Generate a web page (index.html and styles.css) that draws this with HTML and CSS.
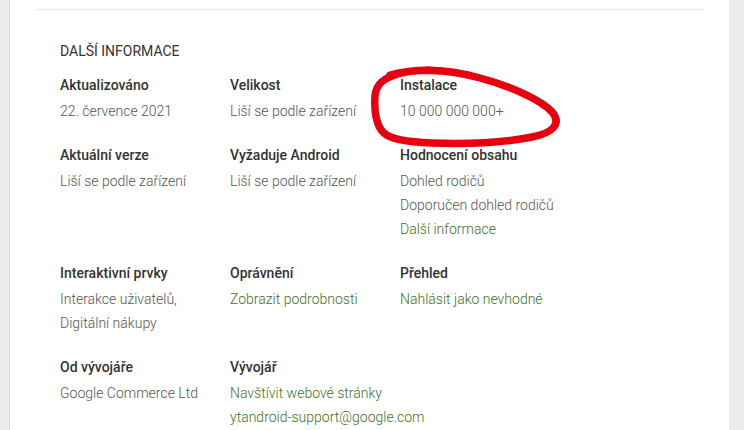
FILE: index.html
```html
<!DOCTYPE html>
<html>
<head>
	<meta charset="UTF-8">
	<title>Další informace</title>
	<link rel="stylesheet" href="styles.css">
</head>
<body>
	<div class="card">
		<div class="divider"></div>
		<div class="details">
			<div class="heading">Další informace</div>
			<div class="grid">
				<div class="item">
					<div class="label">Aktualizováno</div>
					<div class="value">22. července 2021</div>
				</div>
				<div class="item">
					<div class="label">Velikost</div>
					<div class="value">Liší se podle zařízení</div>
				</div>
				<div class="item">
					<div class="label">Instalace</div>
					<div class="value">10 000 000 000+</div>
				</div>
				<div class="item">
					<div class="label">Aktuální verze</div>
					<div class="value">Liší se podle zařízení</div>
				</div>
				<div class="item">
					<div class="label">Vyžaduje Android</div>
					<div class="value">Liší se podle zařízení</div>
				</div>
				<div class="item">
					<div class="label">Hodnocení obsahu</div>
					<div class="value">Dohled rodičů</div>
					<div class="value">Doporučen dohled rodičů</div>
					<div class="value link">Další informace</div>
				</div>
				<div class="item">
					<div class="label">Interaktivní prvky</div>
					<div class="value">Interakce uživatelů,</div>
					<div class="value">Digitální nákupy</div>
				</div>
				<div class="item">
					<div class="label">Oprávnění</div>
					<div class="value link">Zobrazit podrobnosti</div>
				</div>
				<div class="item">
					<div class="label">Přehled</div>
					<div class="value link">Nahlásit jako nevhodné</div>
				</div>
				<div class="item">
					<div class="label">Od vývojáře</div>
					<div class="value">Google Commerce Ltd</div>
				</div>
				<div class="item">
					<div class="label">Vývojář</div>
					<div class="value link">Navštívit webové stránky</div>
					<div class="value link">ytandroid-support@google.com</div>
				</div>
			</div>
		</div>
	</div>
	<svg class="scribble" width="744" height="430" viewBox="0 0 744 430">
		<path d="M390 75 C420 67 452 70 480 78 C510 86 542 100 553 113 C561 124 553 133 532 137 C502 143 462 144 432 143 C406 142 390 139 384 133 C376 126 374 110 375 96 C376 86 381 80 392 76 C404 71 425 69 440 71" />
	</svg>
</body>
</html>
```

FILE: styles.css
```css
body {
	margin: 0;
	background-color: #ececec;
	font-family: Roboto, "Liberation Sans", sans-serif;
	height: 430px;
	overflow: hidden;
}
.card {
	margin-left: 9px;
	width: 720px;
	height: 430px;
	box-sizing: border-box;
	border-left: 1px solid #dadada;
	background-color: #fff;
	padding: 9px 26px 0;
}
.divider {
	border-top: 1px solid #e6e6e6;
}
.details {
	padding: 31px 24px 0;
}
.heading {
	font-size: 14px;
	line-height: 20px;
	text-transform: uppercase;
	color: #333;
	margin-bottom: 12px;
}
.grid {
	display: grid;
	grid-template-columns: repeat(3, 170px);
	row-gap: 20px;
}
.label {
	font-size: 14px;
	font-weight: 500;
	line-height: 24px;
	color: #333;
	margin-bottom: 2px;
}
.value {
	font-size: 14px;
	font-weight: 300;
	line-height: 24px;
	color: #555;
	white-space: nowrap;
}
.link {
	color: #3f6f2c;
}
.scribble {
	position: absolute;
	top: 0;
	left: 0;
	pointer-events: none;
}
.scribble path {
	fill: none;
	stroke: #e60010;
	stroke-width: 7.5;
	stroke-linecap: round;
	stroke-linejoin: round;
}
```
